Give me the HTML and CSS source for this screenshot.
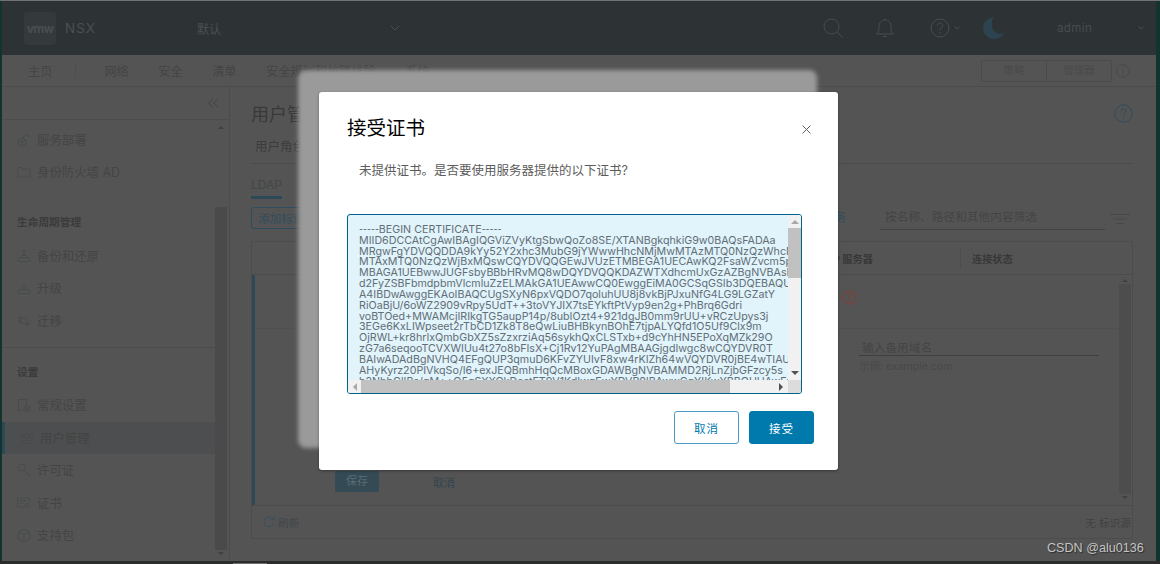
FILE: index.html
```html
<!DOCTYPE html>
<html lang="zh-CN">
<head>
  <meta charset="UTF-8">
  <meta name="viewport" content="width=device-width, initial-scale=1.0">
  <title>NSX 用户管理</title>
  <link rel="stylesheet" href="styles.css">
</head>
<body>
  <div class="screen">
    <div class="app">
      <!-- 顶部栏 -->
      <header class="topbar">
        <div class="logo"><span class="logo_box">vmw</span><span class="logo_name">NSX</span></div>
        <div class="scope"><span>默认</span>
          <svg class="chev" width="10" height="6" viewBox="0 0 10 6"><path d="M1 1l4 4 4-4"/></svg>
        </div>
        <div class="top_icons">
          <svg class="ic_search" width="21" height="21" viewBox="0 0 21 21"><circle cx="8.5" cy="8.5" r="7.5"/><path d="M14 14l6 6"/></svg>
          <svg class="ic_bell" width="20" height="21" viewBox="0 0 20 21"><path d="M10 2c-4 0-6 3-6 6.500v3c0 2-1 3-2.500 4.500h17C17 14.500 16 13.500 16 11.500v-3C16 5 14 2 10 2zM10 .5V2M8 18.500h4"/></svg>
          <svg class="ic_help" width="20" height="20" viewBox="0 0 20 20"><circle cx="10" cy="10" r="9"/><path d="M7.500 7.500c0-3.200 5.200-3.200 5.200 0 0 2-2.700 2-2.700 4.500M10 14v1.500"/></svg>
          <svg class="ic_small" width="6" height="4" viewBox="0 0 6 4"><path d="M.5.500L3 3 5.500.500"/></svg>
          <svg class="ic_moon" width="22" height="22" viewBox="0 0 22 22"><path d="M11 0C5 1 0 5 0 11s5 11 11 11c4.500 0 8-2 10-6-6 2-11-1-12-6-.5-4 0-7 2-10z"/></svg>
          <span class="admin">admin</span>
          <svg class="ic_small" width="6" height="4" viewBox="0 0 6 4"><path d="M.5.500L3 3 5.500.500"/></svg>
        </div>
      </header>

      <!-- 导航 -->
      <nav class="navbar">
        <span class="nav_home">主页</span>
        <span class="nav_sep"></span>
        <span class="nav_item">网络</span>
        <span class="nav_item">安全</span>
        <span class="nav_item">清单</span>
        <span class="nav_item">安全规划和故障排除</span>
        <span class="nav_item">系统</span>
        <div class="nav_right">
          <div class="segment"><span>策略</span><span>管理器</span></div>
          <svg class="ic_info" width="14" height="14" viewBox="0 0 14 14"><circle cx="7" cy="7" r="6.300"/><path d="M7 6v4.500M7 3.500v1.200"/></svg>
        </div>
      </nav>

      <div class="main">
        <!-- 侧边栏 -->
        <aside class="sidebar">
          <div class="side_top">
            <svg class="ic_collapse" width="11" height="10" viewBox="0 0 11 10"><path d="M5 .5L.8 5 5 9.500M10 .5L5.800 5 10 9.500"/></svg>
          </div>
          <div class="side_body">
            <div class="side_list">
              <div class="side_item"><svg width="14" height="14" viewBox="0 0 14 14"><path d="M5 5l4-3M9 2h3v3M1 7l4-2 4 2v4l-4 2-4-2zM1 7l4 2 4-2M5 9v4"/></svg>服务部署</div>
              <div class="side_item"><svg width="13" height="12" viewBox="0 0 13 12"><path d="M.5 11V1.500h4l1 1.500h7v8z"/></svg>身份防火墙 AD</div>
              <div class="side_title first">生命周期管理</div>
              <div class="side_item"><svg width="13" height="12" viewBox="0 0 13 12"><path d="M.5 11.500V8h12v3.500zM3 8l1.500-3h4L10 8M6.500 6V.5M4.500 2.500l2-2 2 2"/></svg>备份和还原</div>
              <div class="side_item"><svg width="13" height="12" viewBox="0 0 13 12"><path d="M.5 11.500V8h12v3.500zM3 8l1.500-3M10 8L8.500 5M6.500 7V.5M4.500 5l2 2 2-2"/></svg>升级</div>
              <div class="side_item"><svg width="13" height="12" viewBox="0 0 13 12"><path d="M3 .5v8h9M.5 3h9v8M1 5l2 3.500M12.500 8.500L10 11"/></svg>迁移</div>
              <div class="side_line"></div>
              <div class="side_title">设置</div>
              <div class="side_item"><svg width="13" height="13" viewBox="0 0 13 13"><path d="M9 6V.5H1v11h5"/><circle cx="9.500" cy="9.500" r="3"/><circle cx="9.500" cy="9.500" r="1"/></svg>常规设置</div>
              <div class="side_item active"><svg width="13" height="12" viewBox="0 0 13 12"><circle cx="6.500" cy="4" r="2.500"/><circle cx="2" cy="3" r="1.500"/><circle cx="11" cy="3" r="1.500"/><path d="M2 11.500V8.500h9v3z"/></svg>用户管理</div>
              <div class="side_item"><svg width="14" height="14" viewBox="0 0 14 14"><circle cx="4.500" cy="4.500" r="3.500"/><path d="M7 7l6 6M10 10l-1.500 1.500M12 12l-1.500 1.500"/></svg>许可证</div>
              <div class="side_item"><svg width="14" height="12" viewBox="0 0 14 12"><path d="M8 10H.5V1h12v5M2.500 3.500h7M2.500 6h4"/><circle cx="10.500" cy="8.500" r="2"/></svg>证书</div>
              <div class="side_item"><svg width="13" height="13" viewBox="0 0 13 13"><path d="M6.500.5l6 2.500v7l-6 2.500-6-2.500V3zM.5 3l6 2.500L12.500 3M6.500 5.500v7"/></svg>支持包</div>
            </div>
            <div class="side_scroll">
              <span class="arrow_up"></span>
              <span class="side_thumb"></span>
              <span class="arrow_down"></span>
            </div>
          </div>
        </aside>

        <!-- 内容 -->
        <section class="content">
          <div class="title_row">
            <h1>用户管理</h1>
            <svg class="ic_page_help" width="19" height="19" viewBox="0 0 19 19"><circle cx="9.500" cy="9.500" r="8.700"/><path d="M7 7c0-3 5-3 5 0 0 2-2.500 2-2.500 4.500M9.500 13.500V15"/></svg>
          </div>
          <div class="subtitle">用户角色分配</div>
          <div class="tabs"><span class="tab_on">LDAP</span></div>
          <div class="toolbar">
            <button class="btn_add">添加标识源</button>
            <span class="link_all">服务</span>
            <span class="filter_input">按名称、路径和其他内容筛选</span>
            <svg class="ic_filter" width="20" height="10" viewBox="0 0 20 10"><path d="M0 .5h20M3 5h14M6 9.500h8"/></svg>
          </div>

          <div class="grid">
            <div class="grid_head">
              <span class="col_server">LDAP 服务器</span>
              <span class="col_state">连接状态</span>
            </div>
            <div class="grid_body">
              <div class="detail">
                <div class="state_row">
                  <svg width="15" height="15" viewBox="0 0 15 15"><circle cx="7.500" cy="7.500" r="6.500"/><path d="M7.500 3.500v5M7.500 10v1.500"/></svg>
                </div>
                <div class="domain">
                  <div class="domain_input">输入备用域名</div>
                  <div class="domain_hint">示例: example.com</div>
                </div>
                <div class="actions">
                  <span class="btn_save">保存</span>
                  <span class="btn_text">取消</span>
                </div>
              </div>
              <div class="grid_scroll">
                <span class="arrow_up"></span>
                <span class="grid_thumb"></span>
                <span class="arrow_down"></span>
              </div>
            </div>
            <div class="grid_foot">
              <span class="refresh">
                <svg width="12" height="12" viewBox="0 0 12 12"><path d="M10.500 3.500A5 5 0 1 0 11 7M11 .5v3.200H7.800"/></svg>
                刷新
              </span>
              <span class="foot_note">无 标识源</span>
            </div>
          </div>
        </section>
      </div>
    </div>
    <div class="bottom_strip"><span></span></div>

    <!-- 对话框 -->
    <div class="modal_back"></div>
    <div class="modal">
      <div class="modal_head">
        <h2>接受证书</h2>
        <svg class="ic_close" width="9" height="9" viewBox="0 0 9 9"><path d="M.5.500l8 8M8.500.500l-8 8"/></svg>
      </div>
      <p class="modal_msg">未提供证书。是否要使用服务器提供的以下证书?</p>
      <div class="cert_box">
        <pre class="cert_text"><span class="cert_dash">-----</span>BEGIN CERTIFICATE<span class="cert_dash">-----</span>
MIID6DCCAtCgAwIBAgIQGViZVyKtgSbwQoZo8SE/XTANBgkqhkiG9w0BAQsFADAa
MRgwFgYDVQQDDA9kYy52Y2xhc3MubG9jYWwwHhcNMjMwMTAzMTQ0NzQzWhcNMjgw
MTAxMTQ0NzQzWjBxMQswCQYDVQQGEwJVUzETMBEGA1UECAwKQ2FsaWZvcm5pYTES
MBAGA1UEBwwJUGFsbyBBbHRvMQ8wDQYDVQQKDAZWTXdhcmUxGzAZBgNVBAsMElZt
d2FyZSBFbmdpbmVlcmluZzELMAkGA1UEAwwCQ0EwggEiMA0GCSqGSIb3DQEBAQUA
A4IBDwAwggEKAoIBAQCUgSXyN6pxVQDO7qoluhUU8j8vkBjPJxuNfG4LG9LGZatY
RiOaBjU/6oWZ2909vRpy5UdT++3toVYJIX7tsEYkftPtVyp9en2g+PhBrq6Gdri
voBTOed+MWAMcjIRIkgTG5aupP14p/8ubIOzt4+921dgJB0mm9rUU+vRCzUpys3j
3EGe6KxLIWpseet2rTbCD1Zk8T8eQwLiuBHBkynBOhE7tjpALYQfd1O5Uf9Clx9m
OjRWL+kr8hrIxQmbGbXZ5sZzxrziAq56sykhQxCLSTxb+d9cYhHN5EPoXqMZk29O
zG7a6seqooTCVXWIUu4t27o8bFIsX+Cj1Rv12YuPAgMBAAGjgdIwgc8wCQYDVR0T
BAIwADAdBgNVHQ4EFgQUP3qmuD6KFvZYUIvF8xw4rKIZh64wVQYDVR0jBE4wTIAU
AHyKyrz20PIVkqSo/I6+exJEQBmhHqQcMBoxGDAWBgNVBAMMD2RjLnZjbGFzcy5s
b2NhbGlIBs/qM++Q5qSXXQkDestFT9V1KdIwgEwYDVR0lBAwwCgYIKwYBBQUHAwEw</pre>
        <div class="cert_vbar">
          <span class="cert_up"></span>
          <span class="cert_vthumb"></span>
          <span class="cert_down"></span>
        </div>
        <div class="cert_hbar">
          <span class="cert_left"></span>
          <span class="cert_hthumb"></span>
          <span class="cert_right"></span>
        </div>
        <div class="cert_corner"></div>
      </div>
      <div class="modal_foot">
        <button class="btn_cancel">取消</button>
        <button class="btn_accept">接受</button>
      </div>
    </div>

    <div class="watermark">CSDN @alu0136</div>
  </div>
</body>
</html>
```

FILE: styles.css
```css
html, body {
  margin: 0;
  padding: 0;
}
body {
  font-family: "Inter", "Noto Sans CJK SC", sans-serif;
  color: #3d3d3d;
}
svg {
  flex: none;
  fill: none;
  stroke: #474b4c;
}
button {
  padding: 0;
  font: inherit;
  cursor: pointer;
}

.screen {
  position: relative;
  display: flex;
  flex-direction: column;
  width: 1160px;
  height: 564px;
  box-sizing: border-box;
  overflow: hidden;
  border-top: 1px solid #6f7271;
  background: #12332e;
}
.app {
  display: flex;
  flex-direction: column;
  height: 560px;
  margin: 0 4px 0 2px;
  background: #545454;
}
.bottom_strip {
  height: 3px;
  background: #2b2d2d;
}
.bottom_strip span {
  display: block;
  width: 34px;
  height: 1px;
  margin: 2px 0 0 233px;
  background: #6e6e6e;
}

/* 顶部栏 */
.topbar {
  display: flex;
  align-items: center;
  height: 54px;
  padding-left: 22px;
  background: #2d3335;
  color: #494f52;
}
.logo {
  display: flex;
  align-items: center;
  width: 173px;
}
.logo_box {
  width: 32px;
  height: 33px;
  line-height: 33px;
  text-align: center;
  font-size: 12px;
  font-weight: 700;
  letter-spacing: -.6px;
  border-radius: 3px;
  background: #343a3c;
  color: #494e50;
}
.logo_name {
  margin-left: 9px;
  font-size: 13.500px;
  letter-spacing: 1px;
  color: #4a5053;
}
.scope {
  display: flex;
  align-items: center;
  justify-content: space-between;
  width: 203px;
  font-size: 12px;
}
.chev {
  stroke: #4a5052;
}
.top_icons {
  display: flex;
  align-items: center;
  margin-left: 423px;
}
.top_icons svg {
  stroke: #474d50;
}
.ic_bell {
  margin-left: 31px;
}
.ic_help {
  margin-left: 35px;
}
.top_icons .ic_small {
  margin-left: 4px;
}
.top_icons .ic_moon {
  margin-left: 23px;
  fill: #2c4350;
  stroke: none;
}
.admin {
  width: 77px;
  margin-left: 52px;
  font-size: 11.500px;
  letter-spacing: .4px;
  color: #474c4e;
}

/* 导航 */
.navbar {
  display: flex;
  align-items: center;
  height: 31px;
  padding-left: 26px;
  border-bottom: 1px solid #4c4c4c;
  font-size: 12.200px;
  color: #444;
}
.nav_sep {
  width: 1px;
  height: 16px;
  margin: 0 28px 0 23px;
  background: #4e4e4e;
}
.nav_item {
  margin-right: 29.500px;
}
.nav_right {
  display: flex;
  align-items: center;
  margin-left: auto;
  margin-right: 26px;
}
.segment {
  display: flex;
  height: 20px;
  border: 1px solid #4b4b4b;
  border-radius: 2px;
  font-size: 10.500px;
  line-height: 20px;
  text-align: center;
  color: #4a4a4a;
}
.segment span {
  width: 64px;
}
.segment span + span {
  border-left: 1px solid #4b4b4b;
}
.ic_info {
  margin-left: 4px;
}

.main {
  display: flex;
  flex: 1;
  min-height: 0;
}

/* 侧边栏 */
.sidebar {
  display: flex;
  flex-direction: column;
  width: 227px;
  border-right: 1px solid #4c4c4c;
}
.side_top {
  display: flex;
  align-items: center;
  justify-content: flex-end;
  height: 32px;
  padding-right: 10px;
  border-bottom: 1px solid #4c4c4c;
}
.ic_collapse {
  stroke: #3f4244;
}
.side_body {
  display: flex;
  flex: 1;
}
.side_list {
  width: 213px;
  padding-top: 3.500px;
}
.side_item {
  display: flex;
  align-items: center;
  gap: 6px;
  height: 32.500px;
  padding-left: 15px;
  font-size: 12.400px;
  color: #444;
}
.side_item svg {
  width: 14px;
}
.side_item.active {
  border-left: 3px solid #2d4857;
  background: #4c4e4f;
}
.side_title {
  height: 32.500px;
  padding-left: 15px;
  font-size: 10.700px;
  font-weight: 700;
  line-height: 32.500px;
  color: #3b3b3b;
}
.side_title.first {
  margin-top: 18.500px;
}
.side_line {
  height: 1px;
  margin-top: 9.500px;
  margin-bottom: 9px;
  background: #4c4c4c;
}
.side_scroll {
  display: flex;
  flex-direction: column;
  align-items: center;
  width: 12px;
  padding: 4px 0;
}
.side_thumb {
  flex: 1;
  width: 12px;
  margin-top: 76px;
  background: #4a4a4a;
}
.arrow_up,
.arrow_down {
  width: 0;
  height: 0;
  margin: 2px 0;
  border-left: 3px solid transparent;
  border-right: 3px solid transparent;
}
.arrow_up {
  border-bottom: 3px solid #404040;
}
.arrow_down {
  border-top: 3px solid #404040;
}

/* 内容 */
.content {
  display: flex;
  flex-direction: column;
  flex: 1;
  min-width: 0;
  padding: 0 23px 0 21px;
}
.title_row {
  display: flex;
  align-items: center;
  justify-content: space-between;
  height: 28px;
  margin-top: 12px;
}
.title_row h1 {
  margin: 0;
  font-size: 18px;
  font-weight: 400;
  color: #393939;
}
.ic_page_help {
  stroke: #2d4d5f;
}
.subtitle {
  height: 33px;
  margin-top: 3px;
  padding-left: 4px;
  border-bottom: 1px solid #4c4c4c;
  font-size: 12.500px;
  line-height: 33px;
  color: #3c3c3c;
}
.tabs {
  height: 27px;
  margin-top: 8px;
}
.tab_on {
  display: inline-block;
  height: 24px;
  border-bottom: 3px solid #2d4857;
  font-size: 12px;
  line-height: 26px;
  color: #424748;
}
.toolbar {
  display: flex;
  align-items: flex-start;
  height: 22px;
  margin-top: 8px;
  font-size: 11.700px;
}
.btn_add {
  width: 72px;
  height: 22px;
  box-sizing: border-box;
  border: 1px solid #2d4d5f;
  border-radius: 3px;
  background: transparent;
  font-size: 11.500px;
  color: #304c5c;
}
.link_all {
  margin-left: auto;
  font-size: 12px;
  line-height: 22px;
  color: #2d4d5f;
}
.filter_input {
  width: 220px;
  height: 22px;
  margin-left: 34px;
  padding-left: 5px;
  border-bottom: 1px solid #434343;
  line-height: 20px;
  color: #444;
}
.ic_filter {
  margin: 7px 3px 0 5px;
  stroke: #484848;
}

.grid {
  display: flex;
  flex-direction: column;
  height: 296px;
  margin-top: 12px;
  border: 1px solid #4c4c4c;
  border-radius: 2px;
}
.grid_head {
  display: flex;
  align-items: center;
  height: 32px;
  flex: none;
  border-bottom: 1px solid #4c4c4c;
  font-size: 10.200px;
  font-weight: 700;
  color: #383838;
}
.col_server {
  width: 147px;
  padding-left: 561px;
  padding-top: 2px;
  padding-bottom: 2px;
  border-right: 1px solid #4c4c4c;
}
.col_state {
  margin-left: 11px;
}
.grid_body {
  display: flex;
  flex: 1;
  min-height: 0;
}
.detail {
  display: flex;
  flex-direction: column;
  flex: 1;
  border-left: 3px solid #2d4857;
}
.state_row {
  height: 54px;
  box-sizing: border-box;
  padding: 14px 0 0 587px;
  border-bottom: 1px solid #505050;
}
.state_row svg {
  stroke: #8a3a2c;
}
.domain {
  width: 240px;
  margin: 12px 0 0 604px;
}
.domain_input {
  height: 14px;
  padding-left: 3px;
  border-bottom: 1px solid #404040;
  font-size: 11.700px;
  line-height: 14px;
  color: #444;
}
.domain_hint {
  margin-top: 4px;
  font-size: 10.500px;
  line-height: 14px;
  color: #484848;
}
.actions {
  display: flex;
  align-items: center;
  margin: auto 0 13px 80px;
  font-size: 11px;
}
.btn_save {
  width: 44px;
  height: 21px;
  border-radius: 2px;
  background: #344b56;
  line-height: 21px;
  text-align: center;
  color: #5a6b73;
}
.btn_text {
  margin-left: 54px;
  color: #34444f;
}
.grid_scroll {
  display: flex;
  flex-direction: column;
  align-items: center;
  width: 12px;
  padding: 2px 1px 4px 0;
}
.grid_thumb {
  flex: 1;
  width: 12px;
  background: #4d4d4d;
}
.grid_foot {
  display: flex;
  align-items: center;
  justify-content: space-between;
  height: 32px;
  flex: none;
  padding: 0 1px 0 11px;
  border-top: 1px solid #4c4c4c;
  font-size: 10.700px;
  color: #3f474c;
}
.refresh {
  display: flex;
  align-items: center;
  gap: 3px;
}
.refresh svg {
  stroke: #37505d;
}
.foot_note {
  color: #414141;
}

/* 对话框 */
.modal_back {
  position: absolute;
  left: 298px;
  top: 69px;
  width: 519px;
  height: 378px;
  border-radius: 8px;
  background: #9a9a9a;
  filter: blur(2px);
}
.modal {
  position: absolute;
  left: 319px;
  top: 91px;
  display: flex;
  flex-direction: column;
  width: 519px;
  height: 378px;
  border-radius: 3px;
  background: #fff;
  box-shadow: 0 1px 3px rgba(0, 0, 0, .35);
  color: #5c5c5c;
}
.modal_head {
  display: flex;
  align-items: center;
  justify-content: space-between;
  height: 26px;
  margin-top: 21px;
  padding: 0 27px 0 28px;
}
.modal_head h2 {
  margin: 0;
  font-size: 19.500px;
  font-weight: 400;
  color: #000;
}
.ic_close {
  margin-top: 6px;
  stroke: #5c5c5c;
}
.modal_msg {
  margin: 22px 0 0 40px;
  font-size: 12.500px;
  line-height: 20px;
}
.cert_box {
  display: grid;
  grid-template-columns: 1fr 13px;
  grid-template-rows: 1fr 13px;
  width: 455px;
  height: 180px;
  box-sizing: border-box;
  flex: none;
  margin: 33px 0 0 28px;
  overflow: hidden;
  border: 1px solid #00618a;
  border-radius: 3px;
  background: #e1f3fb;
}
.cert_text {
  margin: 0;
  padding: 9px 0 0 11px;
  overflow: hidden;
  font-family: "Inter", sans-serif;
  font-size: 10.700px;
  line-height: 10.830px;
  white-space: pre;
  color: #626e76;
}
.cert_dash {
  font-family: "Lato", sans-serif;
}
.cert_vbar {
  display: flex;
  flex-direction: column;
  align-items: center;
  background: #f1f1f1;
}
.cert_vthumb {
  width: 13px;
  height: 50px;
  margin-top: 4px;
  background: #c1c1c1;
}
.cert_up,
.cert_down {
  width: 0;
  height: 0;
  border-left: 4px solid transparent;
  border-right: 4px solid transparent;
}
.cert_up {
  margin-top: 5px;
  border-bottom: 4px solid #a8a8a8;
}
.cert_down {
  margin-top: auto;
  margin-bottom: 5px;
  border-top: 4px solid #505050;
}
.cert_hbar {
  display: flex;
  align-items: center;
  background: #f1f1f1;
}
.cert_hthumb {
  width: 369px;
  height: 13px;
  margin-left: 4px;
  background: #c1c1c1;
}
.cert_left,
.cert_right {
  width: 0;
  height: 0;
  border-top: 4px solid transparent;
  border-bottom: 4px solid transparent;
}
.cert_left {
  margin-left: 5px;
  border-right: 4px solid #a8a8a8;
}
.cert_right {
  margin-left: auto;
  margin-right: 5px;
  border-left: 4px solid #505050;
}
.cert_corner {
  background: #dcdcdc;
}
.modal_foot {
  display: flex;
  justify-content: flex-end;
  gap: 10px;
  margin-top: 17px;
  padding-right: 24px;
}
.modal_foot button {
  width: 65px;
  height: 33px;
  border-radius: 3px;
  font-size: 11.500px;
  letter-spacing: 1px;
}
.btn_cancel {
  border: 1px solid #4a9cc4;
  background: #fff;
  color: #0079ad;
}
.btn_accept {
  border: 1px solid #0079ad;
  background: #0079ad;
  color: #fff;
}

.watermark {
  position: absolute;
  left: 1047px;
  top: 540px;
  font-family: "Liberation Sans", sans-serif;
  font-size: 12.600px;
  line-height: 15px;
  color: #c4c4c4;
  text-shadow: 1px 1px 1px #2c2c2c;
}
```
